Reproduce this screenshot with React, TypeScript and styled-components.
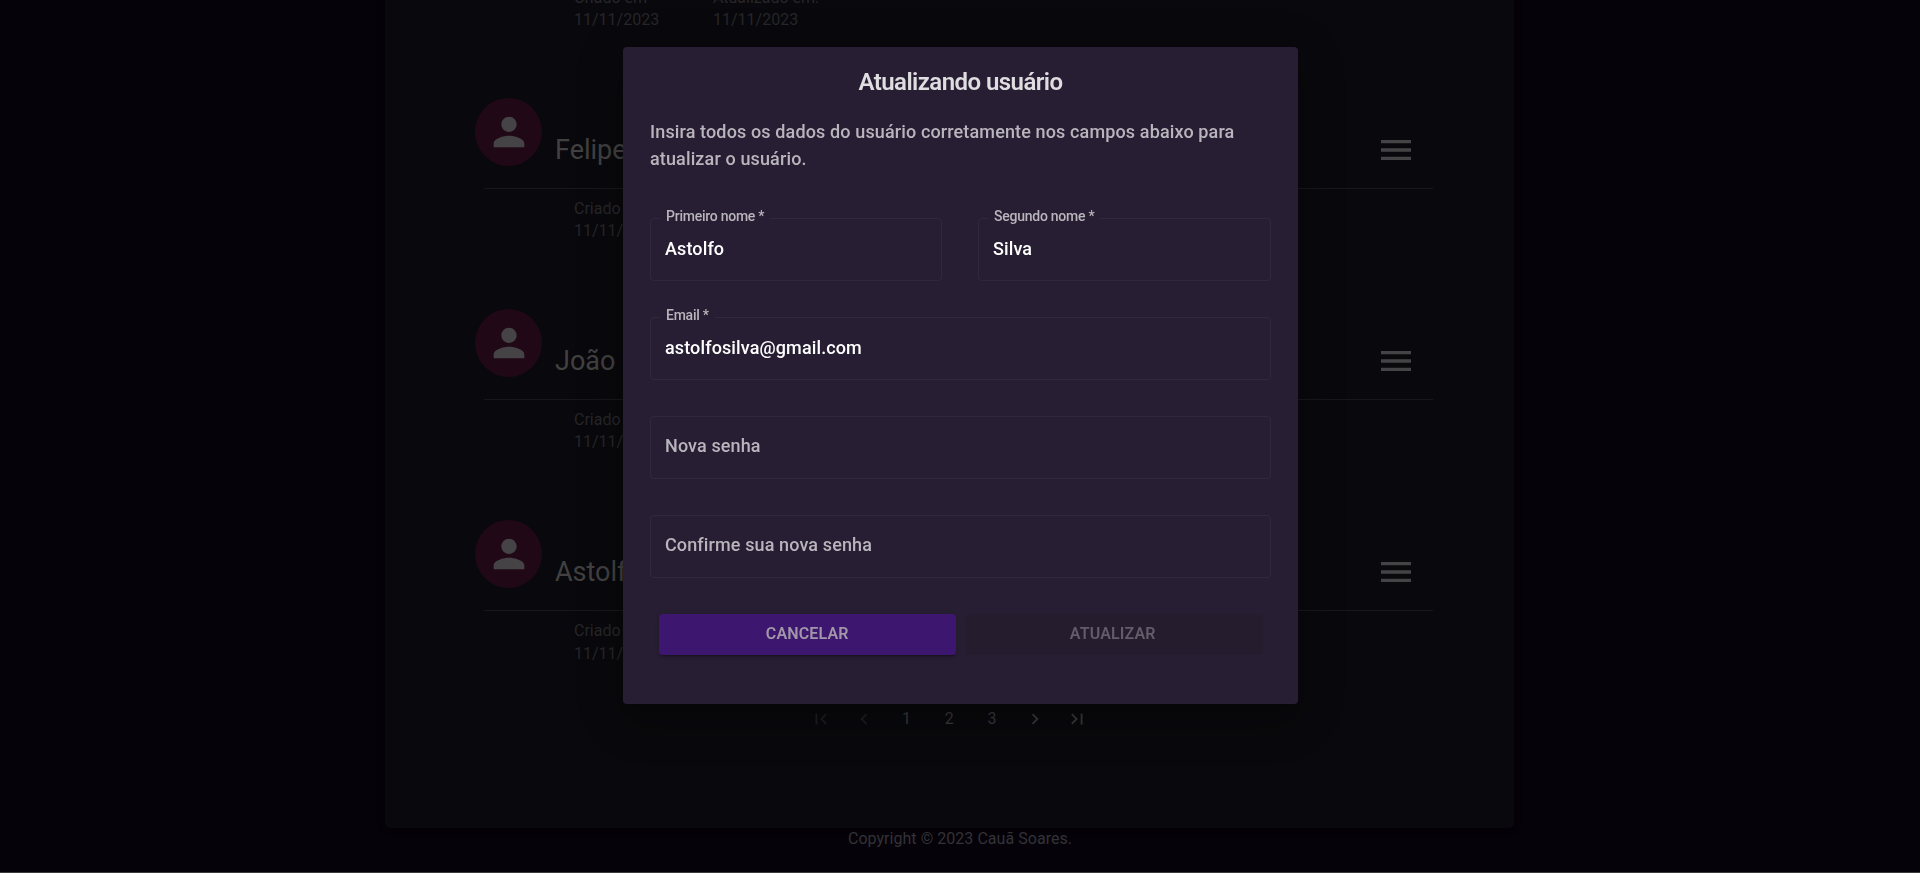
import React from 'react';
import styled, { createGlobalStyle } from 'styled-components';

const GlobalStyle = createGlobalStyle`
  *, *::before, *::after { box-sizing: border-box; }
  body {
    margin: 0;
    background: #050209;
    font-family: Roboto, "Liberation Sans", sans-serif;
    overflow: hidden;
  }
`;

const Page = styled.div`
  height: 873px;
  display: flex;
  flex-direction: column;
  justify-content: flex-end;
  overflow: hidden;
  border-bottom: 1px solid #3a3a3c;
`;

const Card = styled.main`
  flex: none;
  width: 1129px;
  margin-left: 385px;
  padding: 0 80px 89.5px 90px;
  border-radius: 5px;
  background: #09080c;
  box-shadow: 0 2px 6px rgba(0, 0, 0, 0.6);
`;

const UserRow = styled.section`
  margin-bottom: 66.4px;
  &:last-of-type { margin-bottom: 33.5px; }
`;

const RowHeader = styled.header`
  display: flex;
  height: 90px;
`;

const Avatar = styled.div`
  flex: none;
  width: 67px;
  height: 68px;
  border-radius: 50%;
  display: flex;
  align-items: center;
  justify-content: center;
  background: #210817;
`;

const UserName = styled.h2`
  flex: 1;
  margin: 36px 0 0 13px;
  font-size: 27px;
  line-height: 32px;
  font-weight: 400;
  color: #414141;
`;

const MenuButton = styled.div`
  margin: 32px 18px 0 0;
  width: 40px;
  height: 40px;
`;

const Divider = styled.div`
  height: 1px;
  margin: 0 1px 0 9px;
  background: #18171a;
`;

const Dates = styled.div`
  display: flex;
  gap: 54px;
  margin: 9px 0 0 99px;
`;

const DateInfo = styled.div`
  font-size: 16px;
  line-height: 22.4px;
  color: #272629;
  white-space: nowrap;
  width: 85px;
`;

const Pagination = styled.nav`
  display: flex;
  justify-content: center;
  width: 299px;
  margin: 0 0 0 324.7px;
`;

const PageItem = styled.span<{ $disabled?: boolean }>`
  width: 42.7px;
  height: 40px;
  display: flex;
  align-items: center;
  justify-content: center;
  font-size: 16px;
  color: ${(p) => (p.$disabled ? '#1e1d20' : '#39383b')};
`;

const Footer = styled.footer`
  flex: none;
  height: 44px;
  text-align: center;
  font-size: 16px;
  letter-spacing: 0.04px;
  line-height: 22.4px;
  color: #343237;
`;

const Overlay = styled.div`
  position: fixed;
  inset: 0;
  padding: 47px 0 0 1px;
  display: flex;
  justify-content: center;
  align-items: flex-start;
`;

const Dialog = styled.form`
  width: 675px;
  height: 657px;
  padding: 20px 27px 0;
  border-radius: 4px;
  background: #281e33;
  box-shadow: 0 11px 15px -7px rgba(0, 0, 0, 0.2), 0 24px 38px 3px rgba(0, 0, 0, 0.14),
    0 9px 46px 8px rgba(0, 0, 0, 0.12);
`;

const Title = styled.h1`
  margin: 0;
  text-align: center;
  font-size: 24px;
  letter-spacing: -0.55px;
  line-height: 30px;
  font-weight: 600;
  color: #dfdde0;
`;

const Description = styled.p`
  margin: 21px 0 0;
  font-size: 18px;
  letter-spacing: 0.13px;
  line-height: 27px;
  font-weight: 500;
  color: #b9b5bc;
`;

const Fields = styled.div`
  display: grid;
  grid-template-columns: 292px 293px;
  column-gap: 36px;
  row-gap: 36px;
  margin-top: 46px;
`;

const FieldBox = styled.div<{ $wide?: boolean }>`
  position: relative;
  grid-column: ${(p) => (p.$wide ? '1 / -1' : 'auto')};
  height: 63px;
  padding: 0 14px 2px;
  border: 1px solid #32283b;
  border-radius: 4px;
  display: flex;
  align-items: center;
`;

const Value = styled.span<{ $empty?: boolean }>`
  margin-bottom: ${(p) => (p.$empty ? '2px' : '0')};
  font-size: 18px;
  letter-spacing: 0.12px;
  line-height: 27px;
  font-weight: 500;
  color: ${(p) => (p.$empty ? '#b9b5bc' : '#ffffff')};
`;

const FloatingLabel = styled.label`
  position: absolute;
  left: 9px;
  top: -13px;
  padding: 0 6px;
  font-size: 14px;
  letter-spacing: -0.25px;
  line-height: 21px;
  font-weight: 500;
  white-space: nowrap;
  color: #b9b5bc;
  background: #281e33;
`;

const Actions = styled.div`
  display: flex;
  gap: 9px;
  margin: 36px 8px 0 9px;
`;

const Button = styled.button<{ $muted?: boolean }>`
  flex: 1;
  height: 41px;
  padding: ${(p) => (p.$muted ? '0 2px 2px 0' : '0 0 2px')};
  border: 0;
  border-radius: 4px;
  font-family: inherit;
  font-size: 16px;
  letter-spacing: 0.15px;
  font-weight: 600;
  text-transform: uppercase;
  color: ${(p) => (p.$muted ? '#645c6a' : '#a197a8')};
  background: ${(p) => (p.$muted ? '#251c2e' : '#3d176f')};
  box-shadow: ${(p) =>
    p.$muted
      ? 'none'
      : '0 3px 1px -2px rgba(0,0,0,.2), 0 2px 2px 0 rgba(0,0,0,.14), 0 1px 5px 0 rgba(0,0,0,.12)'};
`;

const Icon = ({ d, size, color = 'currentColor' }: { d: string; size: number; color?: string }) => (
  <svg width={size} height={size} viewBox="0 0 24 24" fill={color} aria-hidden="true">
    <path d={d} />
  </svg>
);

const PERSON =
  'M12 12c2.21 0 4-1.79 4-4s-1.79-4-4-4-4 1.79-4 4 1.79 4 4 4zm0 2c-2.67 0-8 1.34-8 4v2h16v-2c0-2.66-5.33-4-8-4z';
const MENU = 'M3 18h18v-2H3v2zm0-5h18v-2H3v2zm0-7v2h18V6H3z';
const FIRST = 'M18.41 16.59L13.82 12l4.59-4.59L17 6l-6 6 6 6zM6 6h2v12H6z';
const PREV = 'M15.41 7.41L14 6l-6 6 6 6 1.41-1.41L10.83 12z';
const NEXT = 'M10 6L8.59 7.41 13.17 12l-4.58 4.59L10 18l6-6z';
const LAST = 'M5.59 7.41L10.18 12l-4.59 4.59L7 18l6-6-6-6zM16 6h2v12h-2z';

const users = ['Ana', 'Felipe', 'João', 'Astolfo'];

const Field = ({ label, value, wide }: { label: string; value?: string; wide?: boolean }) => (
  <FieldBox $wide={wide}>
    {value && <FloatingLabel>{label}</FloatingLabel>}
    <Value $empty={!value}>{value ?? label}</Value>
  </FieldBox>
);

export default function App() {
  return (
    <>
      <GlobalStyle />
      <Page>
        <Card>
          {users.map((name) => (
            <UserRow key={name}>
              <RowHeader>
                <Avatar>
                  <Icon d={PERSON} size={46} color="#454345" />
                </Avatar>
                <UserName>{name}</UserName>
                <MenuButton>
                  <Icon d={MENU} size={40} color="#444345" />
                </MenuButton>
              </RowHeader>
              <Divider />
              <Dates>
                <DateInfo>
                  Criado em
                  <br />
                  11/11/2023
                </DateInfo>
                <DateInfo>
                  Atualizado em:
                  <br />
                  11/11/2023
                </DateInfo>
              </Dates>
            </UserRow>
          ))}
          <Pagination>
            <PageItem $disabled><Icon d={FIRST} size={22} /></PageItem>
            <PageItem $disabled><Icon d={PREV} size={22} /></PageItem>
            <PageItem>1</PageItem>
            <PageItem>2</PageItem>
            <PageItem>3</PageItem>
            <PageItem><Icon d={NEXT} size={22} /></PageItem>
            <PageItem><Icon d={LAST} size={22} /></PageItem>
          </Pagination>
        </Card>
        <Footer>Copyright © 2023 Cauã Soares.</Footer>
      </Page>
      <Overlay>
        <Dialog>
          <Title>Atualizando usuário</Title>
          <Description>
            Insira todos os dados do usuário corretamente nos campos abaixo para atualizar o usuário.
          </Description>
          <Fields>
            <Field label="Primeiro nome *" value="Astolfo" />
            <Field label="Segundo nome *" value="Silva" />
            <Field label="Email *" value="astolfosilva@gmail.com" wide />
            <Field label="Nova senha" wide />
            <Field label="Confirme sua nova senha" wide />
          </Fields>
          <Actions>
            <Button type="button">Cancelar</Button>
            <Button type="button" $muted>Atualizar</Button>
          </Actions>
        </Dialog>
      </Overlay>
    </>
  );
}
